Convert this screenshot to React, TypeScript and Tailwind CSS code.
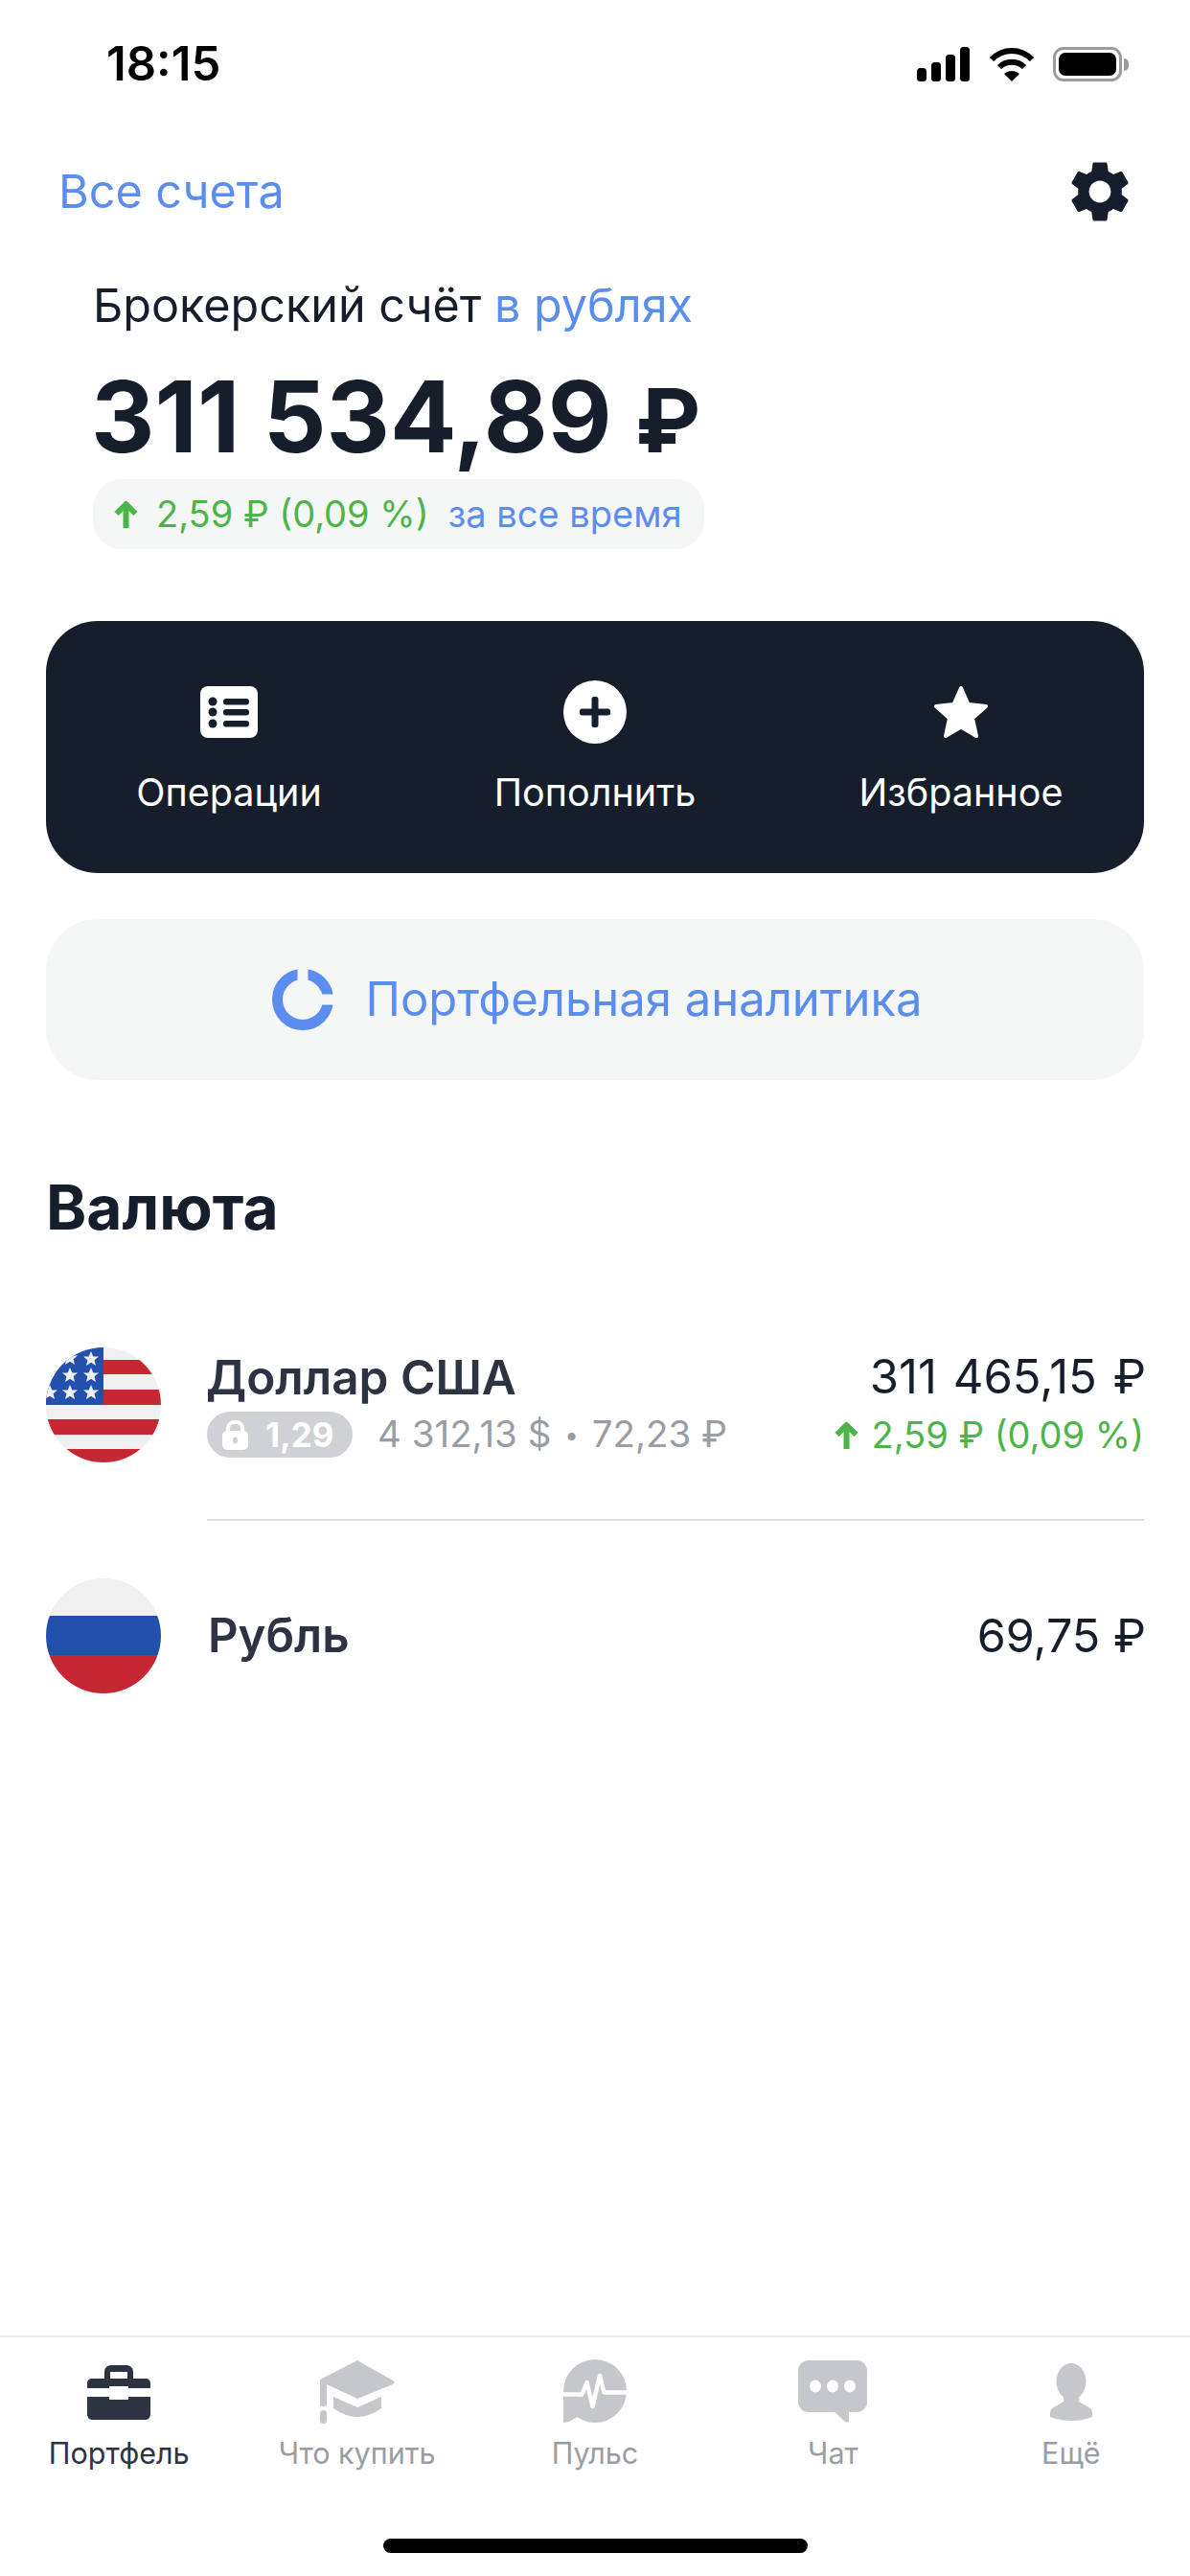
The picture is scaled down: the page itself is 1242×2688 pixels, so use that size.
import { MdSettings } from "react-icons/md";

const tabs = [
  { label: "Портфель", active: true, icon: <BriefcaseIcon /> },
  { label: "Что купить", active: false, icon: <CapIcon /> },
  { label: "Пульс", active: false, icon: <PulseIcon /> },
  { label: "Чат", active: false, icon: <ChatIcon /> },
  { label: "Ещё", active: false, icon: <PersonIcon /> },
];

function SignalIcon() {
  return (
    <svg width="55" height="36" viewBox="0 0 55 36" fill="#000">
      <rect x="0" y="22" width="10" height="14" rx="3.5" />
      <rect x="15" y="16" width="10" height="20" rx="3.5" />
      <rect x="30" y="8" width="10" height="28" rx="3.5" />
      <rect x="45" y="0" width="10" height="36" rx="3.5" />
    </svg>
  );
}

function WifiIcon() {
  return (
    <svg width="48" height="36" viewBox="0 0 48 36" fill="none" stroke="#000" strokeWidth="6">
      <path d="M3 13 C15 1 33 1 45 13" />
      <path d="M11 21 C18 14 30 14 37 21" />
      <path d="M24 36 L16 28 C21 24 27 24 32 28 Z" fill="#000" stroke="none" />
    </svg>
  );
}

function BatteryIcon() {
  return (
    <div className="flex items-center">
      <div className="w-[72px] h-[36px] rounded-[11px] border-[3px] border-[#9b9b9b] p-[3px]">
        <div className="w-full h-full rounded-[7px] bg-black"></div>
      </div>
      <div className="w-[5px] h-[13px] ml-[2px] rounded-r-full bg-[#9b9b9b]"></div>
    </div>
  );
}

function ListIcon() {
  return (
    <svg width="60" height="54" viewBox="0 0 60 54">
      <rect width="60" height="54" rx="8" fill="#fff" />
      <g fill="#161d2b">
        <circle cx="13" cy="16" r="4.5" />
        <circle cx="13" cy="27" r="4.5" />
        <circle cx="13" cy="39" r="4.5" />
        <rect x="24" y="13" width="27" height="6.5" rx="3" />
        <rect x="24" y="24" width="27" height="6.5" rx="3" />
        <rect x="24" y="36" width="27" height="6.5" rx="3" />
      </g>
    </svg>
  );
}

function PlusIcon() {
  return (
    <svg width="66" height="66" viewBox="0 0 66 66">
      <circle cx="33" cy="33" r="33" fill="#fff" />
      <rect x="17" y="29.5" width="32" height="7" rx="2.5" fill="#161d2b" />
      <rect x="29.5" y="17" width="7" height="32" rx="2.5" fill="#161d2b" />
    </svg>
  );
}

function StarIcon() {
  return (
    <svg width="58" height="56" viewBox="0 0 58 56">
      <path
        d="M29 3 L36.5 20 L55 22 L41 34.5 L45 53 L29 43.5 L13 53 L17 34.5 L3 22 L21.5 20 Z"
        fill="#fff"
        stroke="#fff"
        strokeWidth="4"
        strokeLinejoin="round"
      />
    </svg>
  );
}

function RingIcon() {
  return (
    <svg width="64" height="64" viewBox="0 0 64 64">
      <circle cx="32" cy="32" r="26.5" fill="none" stroke="#5b8def" strokeWidth="11" />
      <rect x="26.5" y="0" width="11" height="14" fill="#f5f7f7" />
      <rect x="50" y="26.5" width="14" height="11" fill="#f5f7f7" />
    </svg>
  );
}

function UpArrow() {
  return (
    <svg width="25" height="29" viewBox="0 0 25 29" fill="none" stroke="#4cb54a" strokeWidth="6">
      <path d="M12.5 29 V5" />
      <path d="M2.5 14 L12.5 4 L22.5 14" strokeLinejoin="round" />
    </svg>
  );
}

function UsFlag() {
  const stars = [
    [47, 12],
    [25, 11],
    [47, 29],
    [25, 29],
    [47, 47],
    [25, 47],
    [4, 47],
  ];
  return (
    <svg width="120" height="120" viewBox="0 0 120 120" className="rounded-full shrink-0">
      <rect width="120" height="120" fill="#f0f0f0" />
      <g fill="#c52832">
        <rect y="13" width="120" height="15" />
        <rect y="44" width="120" height="16" />
        <rect y="75" width="120" height="16" />
        <rect y="106" width="120" height="14" />
      </g>
      <rect width="60" height="60" fill="#2450ad" />
      <g fill="#f0f0f0">
        {stars.map(([x, y]) => (
          <path
            key={`${x}-${y}`}
            transform={`translate(${x} ${y})`}
            d="M0 -8 L2.3 -2.6 L8 -2.4 L3.6 1.2 L5 7 L0 3.8 L-5 7 L-3.6 1.2 L-8 -2.4 L-2.3 -2.6 Z"
          />
        ))}
      </g>
    </svg>
  );
}

function RuFlag() {
  return (
    <div className="w-[120px] h-[120px] rounded-full overflow-hidden shrink-0 flex flex-col">
      <div className="h-[39px] bg-[#f0f0f0]"></div>
      <div className="h-[41px] bg-[#2450ad]"></div>
      <div className="h-[40px] bg-[#c52832]"></div>
    </div>
  );
}

function LockIcon() {
  return (
    <svg width="27" height="32" viewBox="0 0 27 32">
      <path d="M6 14 V9.5 C6 0.5 21 0.5 21 9.5 V14" fill="none" stroke="#fff" strokeWidth="4" />
      <rect x="0" y="12" width="27" height="20" rx="5" fill="#fff" />
      <ellipse cx="13.5" cy="22" rx="2.5" ry="3.5" fill="#cfd1d4" />
    </svg>
  );
}

function BriefcaseIcon() {
  return (
    <svg width="66" height="57" viewBox="0 0 66 57">
      <path
        d="M18 14 V7 C18 3 21 0 25 0 H41 C45 0 48 3 48 7 V14 H42 V7 H24 V14 Z"
        fill="#2d3340"
      />
      <path
        d="M5 14 H61 C64 14 66 16 66 19 V24 H43 V22 H23 V24 H0 V19 C0 16 2 14 5 14 Z"
        fill="#2d3340"
      />
      <path
        d="M0 33 H23 V36 H43 V33 H66 V51 C66 54 64 57 61 57 H5 C2 57 0 54 0 51 Z"
        fill="#2d3340"
      />
    </svg>
  );
}

function CapIcon() {
  return (
    <svg width="78" height="66" viewBox="0 0 78 66" fill="#c5c7ca">
      <path d="M39 0 L76 21 Q79 23 76 25 L39 40 L7 25 V47 Q3.5 49 0 47 V21 Q0 20 2 19 Z" />
      <rect x="0" y="52" width="7" height="14" rx="3.5" />
      <path d="M14 38 L39 49 L64 38 V50 Q39 68 14 50 Z" />
    </svg>
  );
}

function PulseIcon() {
  return (
    <svg width="72" height="72" viewBox="0 0 72 72" fill="#c5c7ca">
      <circle cx="36" cy="35" r="33" />
      <path d="M3 35 V68 Q9 68 14 64 L30 55 Z" />
      <path
        d="M0 38.5 H22.5 L27.5 26 L33.5 51 L41 19 L45.5 36.5 H72"
        fill="none"
        stroke="#fff"
        strokeWidth="4.5"
        strokeLinejoin="round"
      />
    </svg>
  );
}

function ChatIcon() {
  return (
    <svg width="72" height="66" viewBox="0 0 72 66" fill="#c5c7ca">
      <rect width="72" height="54" rx="11" />
      <path d="M36 52 L49 64 Q53 66 53 62 L53 52 Z" />
      <g fill="#fff">
        <ellipse cx="18" cy="27" rx="6" ry="6.5" />
        <ellipse cx="36" cy="27" rx="6" ry="6.5" />
        <ellipse cx="54" cy="27" rx="6" ry="6.5" />
      </g>
    </svg>
  );
}

function PersonIcon() {
  return (
    <svg width="44" height="61" viewBox="0 0 44 61" fill="#c5c7ca">
      <ellipse cx="22" cy="19" rx="15.5" ry="19" />
      <path d="M14 30 H30 V40 L42 47 Q44 49 44 52 V56 Q22 64 0 56 V52 Q0 49 2 47 L14 40 Z" />
    </svg>
  );
}

export default function App() {
  return (
    <div className="w-[1242px] h-[2688px] bg-white flex flex-col font-[Inter,sans-serif] overflow-hidden">
      {/* status bar */}
      <div className="h-[134px] shrink-0 flex items-center justify-between pl-[111px] pr-[64px]">
        <span className="text-[49px] font-semibold text-black">18:15</span>
        <div className="flex items-center">
          <SignalIcon />
          <div className="ml-[20px] mr-[19px]"><WifiIcon /></div>
          <BatteryIcon />
        </div>
      </div>

      <div className="mt-[34px] h-[64px] flex items-center justify-between pl-[61px] pr-[62px]">
        <span className="text-[48.5px] text-[#5b8def]">Все счета</span>
        <MdSettings className="w-[76px] h-[76px] text-[#161d2b] -m-[6px]" />
      </div>

      <div className="pl-[97px] mt-[57px]">
        <div className="text-[48.5px] leading-[60px] text-[#161d2b]">
          Брокерский счёт <span className="text-[#5b8def]">в рублях</span>
        </div>
        <div className="mt-[36px] h-[100px] -ml-[2px] text-[103px] leading-[100px] font-bold text-[#161d2b]">
          311 534,89 <span className="text-[92px] leading-none">₽</span>
        </div>
        <div className="mt-[15px] w-[638px] h-[73px] rounded-[30px] bg-[#f5f7f7] flex items-center pl-[22px]">
          <UpArrow />
          <span className="ml-[19px] text-[38px] text-[#4cb54a]">2,59 ₽ (0,09 %)</span>
          <span className="ml-[20px] text-[38px] text-[#5b8def]">за все время</span>
        </div>
      </div>

      <div className="mx-[48px] mt-[75px] h-[263px] rounded-[54px] bg-[#161d2b] grid grid-cols-3 pt-[62px]">
        <div className="flex flex-col items-center">
          <div className="h-[66px] flex items-center"><ListIcon /></div>
          <span className="mt-[26px] text-[39.5px] leading-[50px] text-white">Операции</span>
        </div>
        <div className="flex flex-col items-center">
          <div className="h-[66px] flex items-center"><PlusIcon /></div>
          <span className="mt-[26px] text-[39.5px] leading-[50px] text-white">Пополнить</span>
        </div>
        <div className="flex flex-col items-center">
          <div className="h-[66px] flex items-center"><StarIcon /></div>
          <span className="mt-[26px] text-[39.5px] leading-[50px] text-white">Избранное</span>
        </div>
      </div>

      <div className="mx-[48px] mt-[48px] h-[168px] rounded-[54px] bg-[#f5f7f7] flex items-center justify-center gap-[34px] pl-[4px]">
        <RingIcon />
        <span className="text-[49px] text-[#5b8def]">Портфельная аналитика</span>
      </div>

      <h2 className="mt-[93px] pl-[48px] text-[64px] leading-[80px] font-bold text-[#161d2b]">Валюта</h2>

      <div className="mt-[106px] pl-[48px] flex gap-[48px]">
        <UsFlag />
        <div className="flex-1 mr-[48px] pb-[59px] border-b-2 border-[#dcdee0]">
          <div className="flex justify-between items-center h-[60px] pt-[2px]">
            <span className="-ml-[1px] text-[49.5px] font-semibold text-[#2d3340]">Доллар США</span>
            <span className="-mr-[2px] text-[49px] [word-spacing:3px] text-[#161d2b]">311 465,15 ₽</span>
          </div>
          <div className="flex justify-between items-center h-[60px] pt-[2px]">
            <div className="flex items-center">
              <div className="w-[152px] h-[48px] rounded-full bg-[#cfd1d4] flex items-center pl-[16px] gap-[18px]">
                <LockIcon />
                <span className="text-[35px] font-bold text-white">1,29</span>
              </div>
              <span className="ml-[26px] text-[38.5px] text-[#9a9da3]">
                4 312,13 $ <span className="text-[26px] align-[3px] mx-[3px]">•</span> 72,23 ₽
              </span>
            </div>
            <div className="flex items-center gap-[13px]">
              <UpArrow />
              <span className="text-[38px] text-[#4cb54a]">2,59 ₽ (0,09 %)</span>
            </div>
          </div>
        </div>
      </div>

      <div className="mt-[60px] pl-[48px] flex gap-[48px] items-center">
        <RuFlag />
        <div className="flex-1 mr-[48px] flex justify-between items-center">
          <span className="text-[49px] font-semibold text-[#2d3340] pl-[1px]">Рубль</span>
          <span className="-mr-[2px] text-[48.5px] text-[#161d2b]">69,75 ₽</span>
        </div>
      </div>

      {/* tab bar */}
      <div className="mt-auto border-t-2 border-[#ececec]">
        <div className="grid grid-cols-5 pt-[23px]">
          {tabs.map((t) => (
            <div key={t.label} className="flex flex-col items-center">
              <div className="h-[68px] flex items-center justify-center">{t.icon}</div>
              <span className={`mt-[12px] text-[30.5px] leading-[36px] ${t.active ? "text-[#2d3340]" : "text-[#9a9da3]"}`}>
                {t.label}
              </span>
            </div>
          ))}
        </div>
        <div className="mt-[71px] mb-[24px] mx-auto w-[443px] h-[15px] rounded-full bg-black"></div>
      </div>
    </div>
  );
}
